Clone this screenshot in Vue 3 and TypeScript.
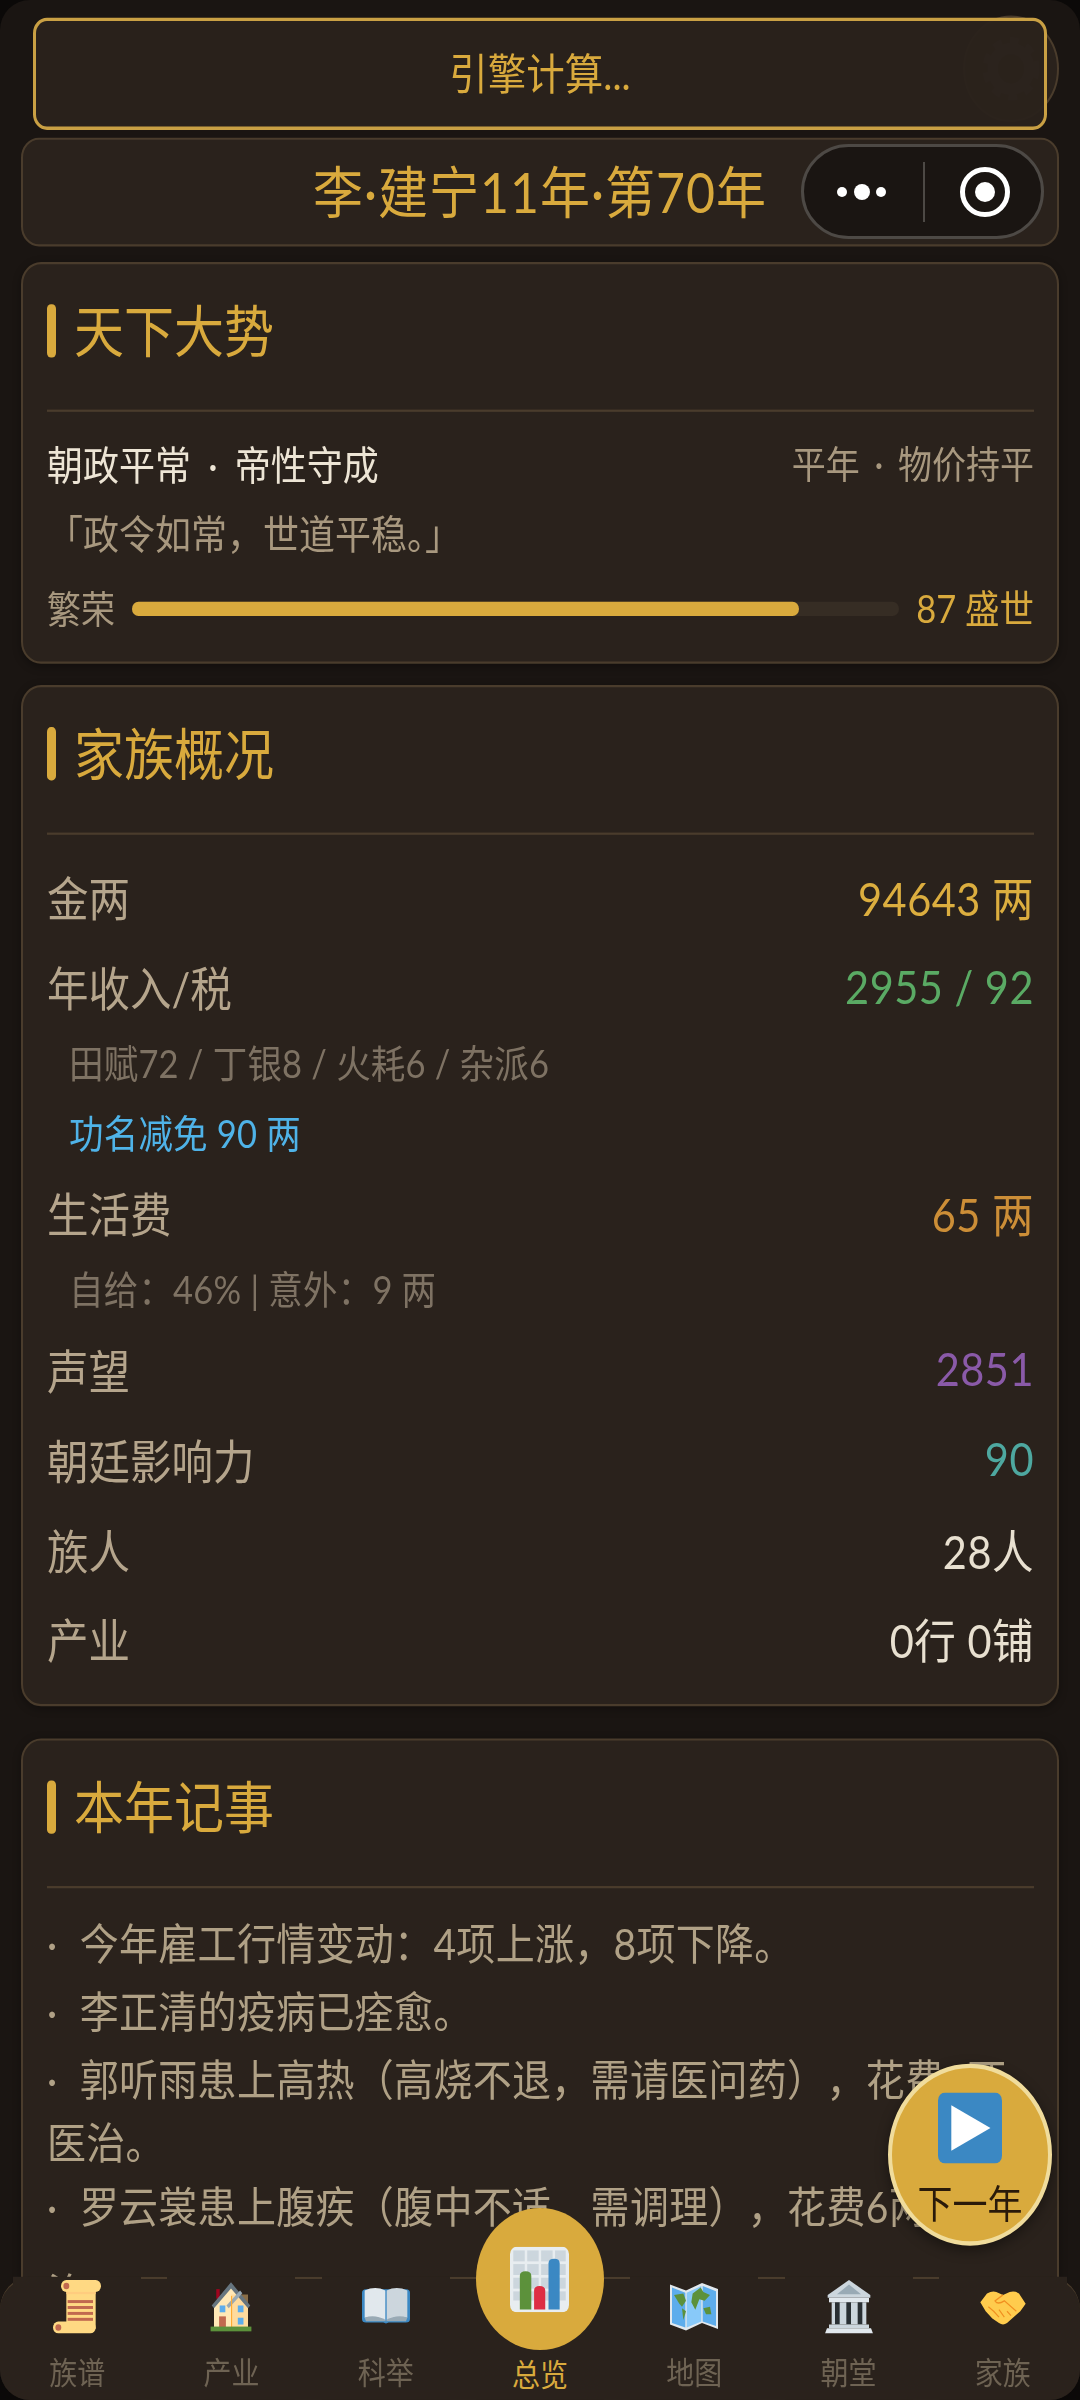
<script setup lang="ts">
import { ref } from "vue";

const prosperity = ref(87);

const newsList = ref([
  '· 今年雇工行情变动：4项上涨，8项下降。',
  '· 李正清的疫病已痊愈。',
  '· 郭听雨患上高热（高烧不退，需请医问药），花费6两医治。',
  '· 罗云裳患上腹疾（腹中不适，需调理），花费6两医治。',
]);

const navList = ref([
  { id: 'scroll', name: '族谱' },
  { id: 'house', name: '产业' },
  { id: 'book', name: '科举' },
  { id: 'chart', name: '总览' },
  { id: 'map', name: '地图' },
  { id: 'court', name: '朝堂' },
  { id: 'hands', name: '家族' },
]);
</script>

<template>
  <div class="app">
    <div class="screen">
      <div class="gear-btn">
        <svg viewBox="0 0 36 36" width="60" height="60">
          <circle cx="18" cy="18" r="11" fill="none" stroke="#fff" stroke-width="6" />
          <circle cx="18" cy="18" r="15" fill="none" stroke="#fff" stroke-width="4" stroke-dasharray="5 5" />
        </svg>
      </div>

      <div class="content">
        <div class="engine-box">引擎计算...</div>
        <div class="top-bar">李·建宁11年·第70年</div>

        <section class="card">
          <div class="card-title"><i></i><span>天下大势</span></div>
          <div class="trend-row">
            <span class="trend-main">朝政平常 · 帝性守成</span>
            <span class="trend-side">平年 · 物价持平</span>
          </div>
          <div class="quote">「政令如常，世道平稳。」</div>
          <div class="prosper">
            <span class="prosper-label">繁荣</span>
            <div class="track"><div class="fill" :style="{ width: prosperity + '%' }"></div></div>
            <span class="prosper-val">87 盛世</span>
          </div>
        </section>

        <section class="card overview">
          <div class="card-title"><i></i><span>家族概况</span></div>
          <div class="stats">
            <div class="stat"><span>金两</span><b class="gold">94643 两</b></div>
            <div class="stat"><span>年收入/税</span><b class="green">2955 / 92</b></div>
            <div class="subs">
              <div class="sub">田赋72 / 丁银8 / 火耗6 / 杂派6</div>
              <div class="sub blue">功名减免 90 两</div>
            </div>
            <div class="stat"><span>生活费</span><b class="orange">65 两</b></div>
            <div class="subs">
              <div class="sub">自给：46% | 意外：9 两</div>
            </div>
            <div class="stat"><span>声望</span><b class="purple">2851</b></div>
            <div class="stat"><span>朝廷影响力</span><b class="teal">90</b></div>
            <div class="stat"><span>族人</span><b class="light">28人</b></div>
            <div class="stat"><span>产业</span><b class="light">0行 0铺</b></div>
          </div>
        </section>

        <section class="card">
          <div class="card-title"><i></i><span>本年记事</span></div>
          <div class="news">
            <p v-for="(item, index) in newsList" :key="index">{{ item }}</p>
          </div>
        </section>
      </div>

      <div class="next-year">
        <svg viewBox="0 0 36 36" width="64" height="64">
          <rect x="0" y="0" width="36" height="36" rx="4" fill="#3b88c3" />
          <path d="M7.5 6.5 L29.5 18 L7.5 29.5 Z" fill="#fff" />
        </svg>
        <span>下一年</span>
      </div>

      <nav class="nav">
        <div v-for="item in navList" :key="item.id" class="nav-item" :class="{ active: item.id === 'chart' }">
          <div class="nav-icon">
            <svg viewBox="0 0 36 36">
              <g v-if="item.id === 'scroll'">
                <rect x="10" y="3" width="22" height="30" fill="#ffd983" />
                <rect x="6" y="0" width="30" height="8" rx="4" fill="#ffd983" />
                <rect x="0" y="28" width="32" height="8" rx="4" fill="#ffd983" />
                <rect x="10" y="8" width="22" height="1.5" fill="#ffcc7f" />
                <circle cx="10" cy="4" r="2.2" fill="#c1694f" />
                <circle cx="4" cy="32" r="2.2" fill="#c1694f" />
                <rect x="11" y="13.5" width="19" height="2" fill="#c1694f" />
                <rect x="11" y="17.5" width="19" height="2" fill="#c1694f" />
                <rect x="11" y="21.5" width="19" height="2" fill="#c1694f" />
                <rect x="11" y="25.5" width="19" height="2" fill="#c1694f" />
              </g>
              <g v-else-if="item.id === 'house'" transform="translate(2.7 1.5) scale(.85 .92)">
                <rect x="5" y="5" width="3" height="7" fill="#a0041e" />
                <path d="M3 16 L18 3 L33 16 V33 H3 Z" fill="#ffe8b6" />
                <path d="M18 9 H33 V33 H18 Z" fill="#ffcc7f" opacity=".45" />
                <path d="M1 17 L18 0 L35 17 L33 19 L18 4.5 L3 19 Z" fill="#66757f" />
                <path d="M14 17 L26 6 L28 8 L16 19 Z" fill="#99aab5" />
                <rect x="8" y="17" width="5" height="5" fill="#5dadec" />
                <rect x="24" y="17" width="5" height="5" fill="#5dadec" />
                <rect x="24" y="26" width="5" height="5" fill="#5dadec" />
                <rect x="7.500" y="25" width="6" height="8" fill="#c1694f" />
                <rect x="18" y="10" width="1" height="23" fill="#ffac33" />
                <rect x="0" y="32.500" width="36" height="3.500" fill="#5c913b" />
              </g>
              <g v-else-if="item.id === 'book'" transform="translate(0 3) scale(1 .8)">
                <path d="M0 7 Q0 4 3 4 H33 Q36 4 36 7 V29 Q36 32 33 32 H20 L18 33 L16 32 H3 Q0 32 0 29 Z" fill="#3b88c3" />
                <path d="M2 5 Q10 1 17.500 5 V30 Q10 26 2 28 Z" fill="#e1e8ed" />
                <path d="M18.500 5 Q26 1 34 5 V28 Q26 26 18.500 30 Z" fill="#ccd6dd" />
                <path d="M2 28 Q10 25 17.500 30 L18 31 H3 Z" fill="#99aab5" />
                <path d="M34 28 Q26 25 18.500 30 L18 31 H33 Z" fill="#99aab5" />
              </g>
              <g v-else-if="item.id === 'chart'">
                <rect x="0" y="0" width="36" height="36" rx="4" fill="#e8edf0" />
                <g fill="#ccd6dd">
                  <rect x="2" y="2" width="7" height="6" /><rect x="10.500" y="2" width="7" height="6" /><rect x="19" y="2" width="7" height="6" /><rect x="27.500" y="2" width="6.500" height="6" />
                  <rect x="2" y="9.500" width="7" height="6" /><rect x="10.500" y="9.500" width="7" height="6" /><rect x="19" y="9.500" width="7" height="6" /><rect x="27.500" y="9.500" width="6.500" height="6" />
                  <rect x="2" y="17" width="7" height="6" /><rect x="10.500" y="17" width="7" height="6" /><rect x="19" y="17" width="7" height="6" /><rect x="27.500" y="17" width="6.500" height="6" />
                  <rect x="2" y="24.500" width="7" height="5" /><rect x="10.500" y="24.500" width="7" height="5" /><rect x="19" y="24.500" width="7" height="5" /><rect x="27.500" y="24.500" width="6.500" height="5" />
                </g>
                <path d="M6 34.500 V16 Q6 13.500 9.500 13.500 Q13 13.500 13 16 V34.500 Z" fill="#5c913b" />
                <path d="M14.700 34.500 V24 Q14.700 21.500 18 21.500 Q21.500 21.500 21.500 24 V34.500 Z" fill="#dd2e44" />
                <path d="M23.500 34.500 V9 Q23.500 6.600 27 6.600 Q30.300 6.600 30.300 9 V34.500 Z" fill="#3b88c3" />
              </g>
              <g v-else-if="item.id === 'map'">
                <path d="M0 3 L12 7 L24 2 L36 6 V33 L24 29 L12 34 L0 30 Z" fill="#e1e8ed" />
                <path d="M1.500 5 L11.500 8.500 V32 L1.500 29 Z" fill="#5dadec" />
                <path d="M12.500 8.500 L23.500 4 V28 L12.500 32 Z" fill="#88c9f9" />
                <path d="M24.500 4 L34.500 7.500 V31 L24.500 28 Z" fill="#5dadec" />
                <path d="M3 10 L10 9 L12 14 L9 18 L7 16 Z" fill="#5c913b" />
                <path d="M9 19 L12 21 L10 27 Z" fill="#5c913b" />
                <path d="M17 9 L23 5 L25 8 L30 10 L26 14 L22 13 L19 20 L16 15 Z" fill="#5c913b" />
                <path d="M25 19 L30 18 L31 23 L27 23 Z" fill="#5c913b" />
              </g>
              <g v-else-if="item.id === 'court'">
                <path d="M18 0 L34 10 V12 H2 V10 Z" fill="#ccd6dd" />
                <path d="M18 3 L27 9.500 H9 Z" fill="#99aab5" />
                <rect x="3" y="12" width="30" height="3" fill="#e1e8ed" />
                <rect x="5" y="15" width="26" height="15" fill="#ccd6dd" />
                <rect x="7.500" y="15" width="3.500" height="15" fill="#292f33" />
                <rect x="16" y="15" width="3.500" height="15" fill="#292f33" />
                <rect x="24.500" y="15" width="3.500" height="15" fill="#292f33" />
                <rect x="3" y="30" width="30" height="2.500" fill="#ccd6dd" />
                <path d="M1.500 32.500 H34.500 L36 36 H0 Z" fill="#e1e8ed" />
              </g>
              <g v-else>
                <path d="M1 15 L6 9 Q10 7 13 8 L18 10 L23 8 Q27 7 30 9 L35 16 L31 21 L21 29 Q18 31 15 29 L10 26 L5 21 Z" fill="#ffcc4d" />
                <path d="M18 10 L12 14 Q14 17 19 14 L28 21" fill="none" stroke="#f19020" stroke-width=".9" />
                <path d="M11 21 L15 25 M15 20 L19 25 M21 21 L24 24 M7 18 L11 21" fill="none" stroke="#f19020" stroke-width=".9" />
              </g>
            </svg>
          </div>
          <span class="nav-name">{{ item.name }}</span>
        </div>
      </nav>
    </div>

    <div class="capsule">
      <svg width="52" height="20" viewBox="0 0 52 20">
        <circle cx="6" cy="10" r="5" fill="#fff" />
        <circle cx="26" cy="10" r="8" fill="#fff" />
        <circle cx="45" cy="10" r="5" fill="#fff" />
      </svg>
      <i class="capsule-line"></i>
      <svg width="52" height="52" viewBox="0 0 52 52">
        <circle cx="26" cy="26" r="22.500" fill="none" stroke="#fff" stroke-width="5" />
        <circle cx="26" cy="26" r="10" fill="#fff" />
      </svg>
    </div>
  </div>
</template>

<style>
html, body {
  margin: 0;
  background: #0b0908;
  overflow: hidden;
}
</style>

<style scoped>
.app {
  position: relative;
  width: 1080px;
  height: 2400px;
  overflow: hidden;
  border-radius: 30px;
  background: #1a1512;
  font-family: Lato, "Noto Sans CJK SC", sans-serif;
}

/* 整页纵向拉伸，胶囊按钮除外 */
.screen {
  position: relative;
  width: 1080px;
  height: 2162px;
  overflow: hidden;
  transform: scaleY(1.11008);
  transform-origin: top left;
}

.content {
  position: relative;
  box-sizing: border-box;
  padding: 16px 21px 0;
}

.gear-btn {
  position: absolute;
  top: 14px;
  left: 963px;
  box-sizing: border-box;
  width: 96px;
  height: 96px;
  border: 2px solid #4a3c2c;
  border-radius: 50%;
  background: #2a221c;
  display: flex;
  justify-content: center;
  align-items: center;
}

.gear-btn svg {
  opacity: .2;
}

.engine-box {
  box-sizing: border-box;
  height: 101px;
  margin: 0 12px 7px;
  border: 3px solid #c9a044;
  border-radius: 14px;
  background: rgba(42, 34, 28, .97);
  color: #d9aa3d;
  font-size: 38.500px;
  line-height: 95px;
  text-align: center;
}

.top-bar {
  box-sizing: border-box;
  height: 98px;
  margin-bottom: 14px;
  border: 2px solid #4a3c2c;
  border-radius: 18px;
  background: #2a221c;
  color: #d9aa3d;
  font-size: 50px;
  letter-spacing: 1px;
  line-height: 94px;
  text-align: center;
}

.card {
  box-sizing: border-box;
  margin-bottom: 19px;
  padding: 36px 23px 26px 24px;
  border: 2px solid #4a3c2c;
  border-radius: 20px;
  background: #2a221c;
  box-shadow: 0 2px 8px rgba(0, 0, 0, .3);
}

.overview {
  margin-bottom: 29px;
  padding-bottom: 19px;
}

.card-title {
  display: flex;
  align-items: center;
  gap: 18px;
  height: 48px;
  padding-bottom: 47px;
  border-bottom: 2px solid #4a3c2c;
  color: #d9aa3d;
  font-size: 50px;
  line-height: 48px;
}

.card-title i {
  width: 9px;
  height: 48px;
  border-radius: 4px;
  background: #d9aa3d;
}

.trend-row {
  display: flex;
  justify-content: space-between;
  margin-top: 25px;
  line-height: 44px;
}

.trend-main {
  color: #ede5d5;
  font-size: 36px;
  word-spacing: 8px;
}

.trend-side {
  color: #a8987f;
  font-size: 34px;
  word-spacing: 6px;
}

.quote {
  margin-top: 19px;
  color: #a8987f;
  font-size: 36px;
  line-height: 44px;
}

.prosper {
  display: flex;
  align-items: center;
  gap: 17px;
  margin-top: 23px;
  line-height: 44px;
}

.prosper-label {
  color: #a8987f;
  font-size: 34px;
}

.track {
  flex: 1;
  height: 13px;
  border-radius: 7px;
  background: #362d24;
}

.fill {
  height: 100%;
  border-radius: 7px;
  background: #d9aa3d;
}

.prosper-val {
  color: #d9aa3d;
  font-size: 34.500px;
}

.stats {
  margin-top: 14px;
}

.stat {
  display: flex;
  justify-content: space-between;
  align-items: center;
  height: 81px;
  color: #b5a58c;
  font-size: 41.500px;
}

.stat b {
  font-weight: 400;
  letter-spacing: .5px;
}

.subs {
  display: flex;
  flex-direction: column;
  gap: 19px;
  margin: 8px 0;
  padding-left: 22px;
}

.sub {
  color: #7e7263;
  font-size: 34.500px;
  line-height: 44px;
  letter-spacing: .2px;
}

.blue { color: #4fb3e8; }
.gold { color: #dcae3f; }
.green { color: #5aaa64; }
.orange { color: #cc8e37; }
.purple { color: #8a5aa8; }
.teal { color: #4ea8a0; }
.light { color: #e8e0d0; }

.news {
  margin-top: 22px;
}

.news p {
  margin: 0 0 4px;
  color: #b0a186;
  font-size: 39px;
  letter-spacing: .3px;
  line-height: 57px;
  word-spacing: 12px;
  text-spacing-trim: space-all;
}

.news p:last-child {
  margin-top: -14px;
  line-height: 78px;
}

.next-year {
  position: absolute;
  top: 1859px;
  left: 888px;
  box-sizing: border-box;
  width: 164px;
  height: 164px;
  padding-top: 22px;
  border: 4px solid #f0dc9c;
  border-radius: 50%;
  background: #d9aa3d;
  box-shadow: 0 4px 12px rgba(0, 0, 0, .4);
  display: flex;
  flex-direction: column;
  align-items: center;
  color: #2a1a0a;
  font-size: 35px;
  line-height: 44px;
}

.next-year span {
  margin-top: 13px;
}

.nav {
  position: absolute;
  left: 0;
  right: 0;
  bottom: 0;
  height: 111px;
  box-sizing: border-box;
  border-top: 2px solid #4a3c2c;
  border-radius: 30px 30px 0 0;
  background: #2a221c;
  display: grid;
  grid-template-columns: repeat(7, 1fr);
  justify-items: center;
}

.nav-item {
  position: relative;
  width: 128px;
  height: 111px;
  margin-top: -2px;
  background: #2a221c;
  display: flex;
  flex-direction: column;
  align-items: center;
}

.nav-icon {
  width: 48px;
  height: 48px;
  margin-top: 3px;
}

.nav-icon svg {
  display: block;
  width: 100%;
  height: 100%;
}

.nav-name {
  margin-top: 17px;
  color: #6e6353;
  font-size: 28px;
  line-height: 36px;
}

.active .nav-icon {
  position: absolute;
  top: -62px;
  left: 0;
  width: 128px;
  height: 128px;
  margin: 0;
  border-radius: 50%;
  background: #d9aa3d;
  display: flex;
  justify-content: center;
  align-items: center;
}

.active .nav-icon svg {
  width: 59px;
  height: 59px;
}

.active .nav-name {
  margin-top: 69px;
  color: #d9aa3d;
}

.capsule {
  position: absolute;
  top: 144px;
  left: 801px;
  box-sizing: border-box;
  width: 243px;
  height: 95px;
  border: 3px solid #4d4945;
  border-radius: 48px;
  background: #1a1512;
  display: flex;
  align-items: center;
  justify-content: space-between;
  padding: 0 30px 0 32px;
}

.capsule-line {
  width: 2px;
  height: 60px;
  background: #4d4945;
}
</style>
